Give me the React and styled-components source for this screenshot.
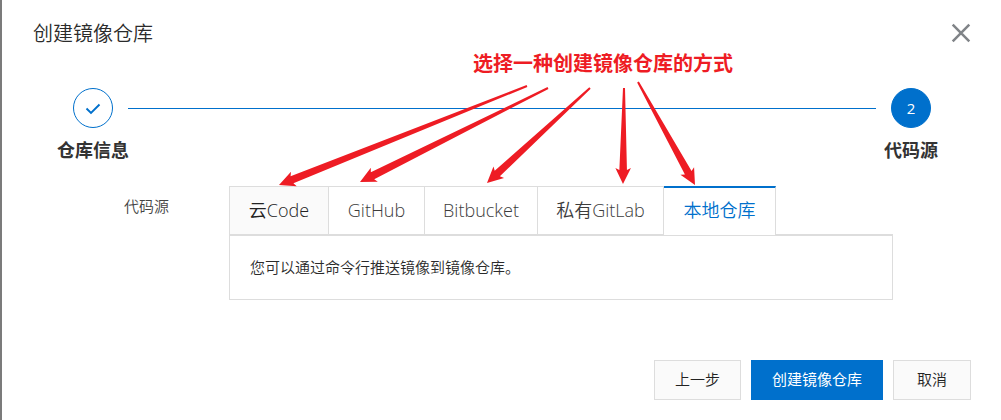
import React from "react";
import styled, { createGlobalStyle } from "styled-components";

const BLUE = "#0070cc";
const LINE = "#dddddd";
const RED = "#ee1c24";

const GlobalStyle = createGlobalStyle`
  *, *::before, *::after { box-sizing: border-box; }
  body {
    margin: 0;
    background: #fff;
    color: #2b2b2b;
    font-family: "Open Sans", "Noto Sans CJK SC", sans-serif;
    font-size: 15px;
    font-weight: 350;
    line-height: 20px;
  }
  button { font: inherit; cursor: pointer; }
`;

const Dialog = styled.main`
  position: relative;
  border-left: 2px solid #7b7b7b;
  min-height: 100vh;
  background: #fff;
`;

const Header = styled.header`
  display: flex;
  align-items: center;
  justify-content: space-between;
  padding: 20px 30px 0 31px;
`;

const Title = styled.h1`
  margin: 0;
  font-size: 20px;
  font-weight: 350;
  line-height: 28px;
`;

const CloseButton = styled.button`
  display: flex;
  padding: 0 0 2px;
  border: 0;
  background: none;
  color: #808488;
`;

const Steps = styled.ol`
  display: flex;
  align-items: flex-start;
  margin: 0;
  padding: 40px 55px 0 56px;
  list-style: none;
`;

const Step = styled.li`
  display: flex;
  flex: 0 0 70px;
  min-width: 0;
  flex-direction: column;
  align-items: center;
  gap: 10px;
`;

const StepMark = styled.span`
  display: flex;
  align-items: center;
  justify-content: center;
  width: 40px;
  height: 40px;
  border: 1px solid ${BLUE};
  border-radius: 50%;
  background: ${(p) => (p.$current ? BLUE : "#fff")};
  color: ${(p) => (p.$current ? "#fff" : BLUE)};
  font-weight: 400;
`;

const StepLabel = styled.span`
  color: #333;
  font-size: 18px;
  font-weight: 700;
  line-height: 24px;
  white-space: nowrap;
`;

const StepLine = styled.li`
  flex: 1;
  height: 1px;
  margin-top: 20px;
  background: ${BLUE};
`;

const Field = styled.section`
  display: flex;
  align-items: flex-start;
  padding: 24px 108px 0 122px;
`;

const FieldLabel = styled.span`
  flex: 0 0 105px;
  padding-top: 10px;
  color: #444;
`;

const Source = styled.div`
  flex: 1;
  min-width: 0;
`;

const TabList = styled.div`
  display: flex;
  height: 49px;
  border-bottom: 1px solid ${LINE};
`;

const Tab = styled.button`
  flex: 0 0 ${(p) => p.$width}px;
  height: ${(p) => (p.$active ? 49 : 48)}px;
  padding: 0 0 ${(p) => (p.$active ? 3 : 1)}px;
  border: 0 solid ${LINE};
  border-top: ${(p) => (p.$active ? `2px solid ${BLUE}` : `1px solid ${LINE}`)};
  border-right-width: 1px;
  background: ${(p) => (p.$shaded ? "#fafafa" : "#fff")};
  color: ${(p) => (p.$active ? BLUE : p.$shaded ? "#222" : "#3c3c3c")};
  font-size: 18px;
  line-height: 24px;
  white-space: nowrap;

  &:first-child { border-left-width: 1px; }
`;

const Panel = styled.div`
  padding: 21px 20px 22px;
  border: 1px solid ${LINE};
  font-size: 15px;
`;

const Text = styled.p`
  margin: 0;
`;

const Footer = styled.footer`
  display: flex;
  justify-content: flex-end;
  gap: 10px;
  padding: 60px 30px 20px;
`;

const Button = styled.button`
  min-width: 78px;
  height: 40px;
  padding: 0 20px 2px;
  border: 1px solid ${(p) => (p.$primary ? BLUE : LINE)};
  background: ${(p) => (p.$primary ? BLUE : "#fafafa")};
  color: ${(p) => (p.$primary ? "#fff" : "#222")};
  font-weight: ${(p) => (p.$primary ? 400 : 350)};
`;

const Note = styled.div`
  position: absolute;
  top: 51px;
  left: 471px;
  color: ${RED};
  font-size: 20px;
  font-weight: 700;
  line-height: 26px;
  white-space: nowrap;
`;

const Arrows = styled.svg`
  position: absolute;
  top: 0;
  left: -2px;
  pointer-events: none;
`;

const tabs = [
  { name: "云Code", width: 100, shaded: true },
  { name: "GitHub", width: 96 },
  { name: "Bitbucket", width: 113 },
  { name: "私有GitLab", width: 126 },
  { name: "本地仓库", width: 112, active: true },
];

const arrows = [
  { tail: [527, 86], tip: [279, 185] },
  { tail: [548, 88], tip: [360, 182] },
  { tail: [590, 88], tip: [487, 183] },
  { tail: [624, 88], tip: [623, 184] },
  { tail: [638, 82], tip: [695, 185] },
];

// Tapered arrow: thin at the tail, widening to a barbed head.
function arrowPoints({ tail, tip }) {
  const dx = tip[0] - tail[0];
  const dy = tip[1] - tail[1];
  const length = Math.hypot(dx, dy);
  const ux = dx / length;
  const uy = dy / length;
  const at = (back, side) =>
    `${tip[0] - ux * back - uy * side},${tip[1] - uy * back + ux * side}`;
  return [
    at(length, 1), at(14, 3.8), at(16, 7.8), at(0, 0),
    at(16, -7.8), at(14, -3.8), at(length, -1),
  ].join(" ");
}

export default function App() {
  return (
    <>
      <GlobalStyle />
      <Dialog>
        <Header>
          <Title>创建镜像仓库</Title>
          <CloseButton type="button" aria-label="关闭">
            <svg width="20" height="20" viewBox="0 0 20 20" aria-hidden="true">
              <path d="M1.7 1.7 18.3 18.3M18.3 1.7 1.7 18.3" stroke="currentColor" strokeWidth="2.5" fill="none" />
            </svg>
          </CloseButton>
        </Header>
        <Steps>
          <Step>
            <StepMark>
              <svg width="16" height="14" viewBox="0 0 16 14" aria-hidden="true">
                <path d="M1.5 7.5 6 12 14.5 3.5" stroke="currentColor" strokeWidth="1.9" fill="none" />
              </svg>
            </StepMark>
            <StepLabel>仓库信息</StepLabel>
          </Step>
          <StepLine aria-hidden="true" />
          <Step aria-current="step">
            <StepMark $current>2</StepMark>
            <StepLabel>代码源</StepLabel>
          </Step>
        </Steps>
        <Field>
          <FieldLabel id="source-label">代码源</FieldLabel>
          <Source>
            <TabList role="tablist" aria-labelledby="source-label">
              {tabs.map((t) => (
                <Tab
                  key={t.name}
                  type="button"
                  role="tab"
                  aria-selected={!!t.active}
                  $width={t.width}
                  $active={t.active}
                  $shaded={t.shaded}
                >
                  {t.name}
                </Tab>
              ))}
            </TabList>
            <Panel role="tabpanel">
              <Text>您可以通过命令行推送镜像到镜像仓库。</Text>
            </Panel>
          </Source>
        </Field>
        <Footer>
          <Button type="button">上一步</Button>
          <Button type="button" $primary>创建镜像仓库</Button>
          <Button type="button">取消</Button>
        </Footer>
        <Note>选择一种创建镜像仓库的方式</Note>
        <Arrows width="720" height="190" viewBox="0 0 720 190" aria-hidden="true">
          {arrows.map((a) => (
            <polygon key={a.tip[0]} points={arrowPoints(a)} fill={RED} />
          ))}
        </Arrows>
      </Dialog>
    </>
  );
}
